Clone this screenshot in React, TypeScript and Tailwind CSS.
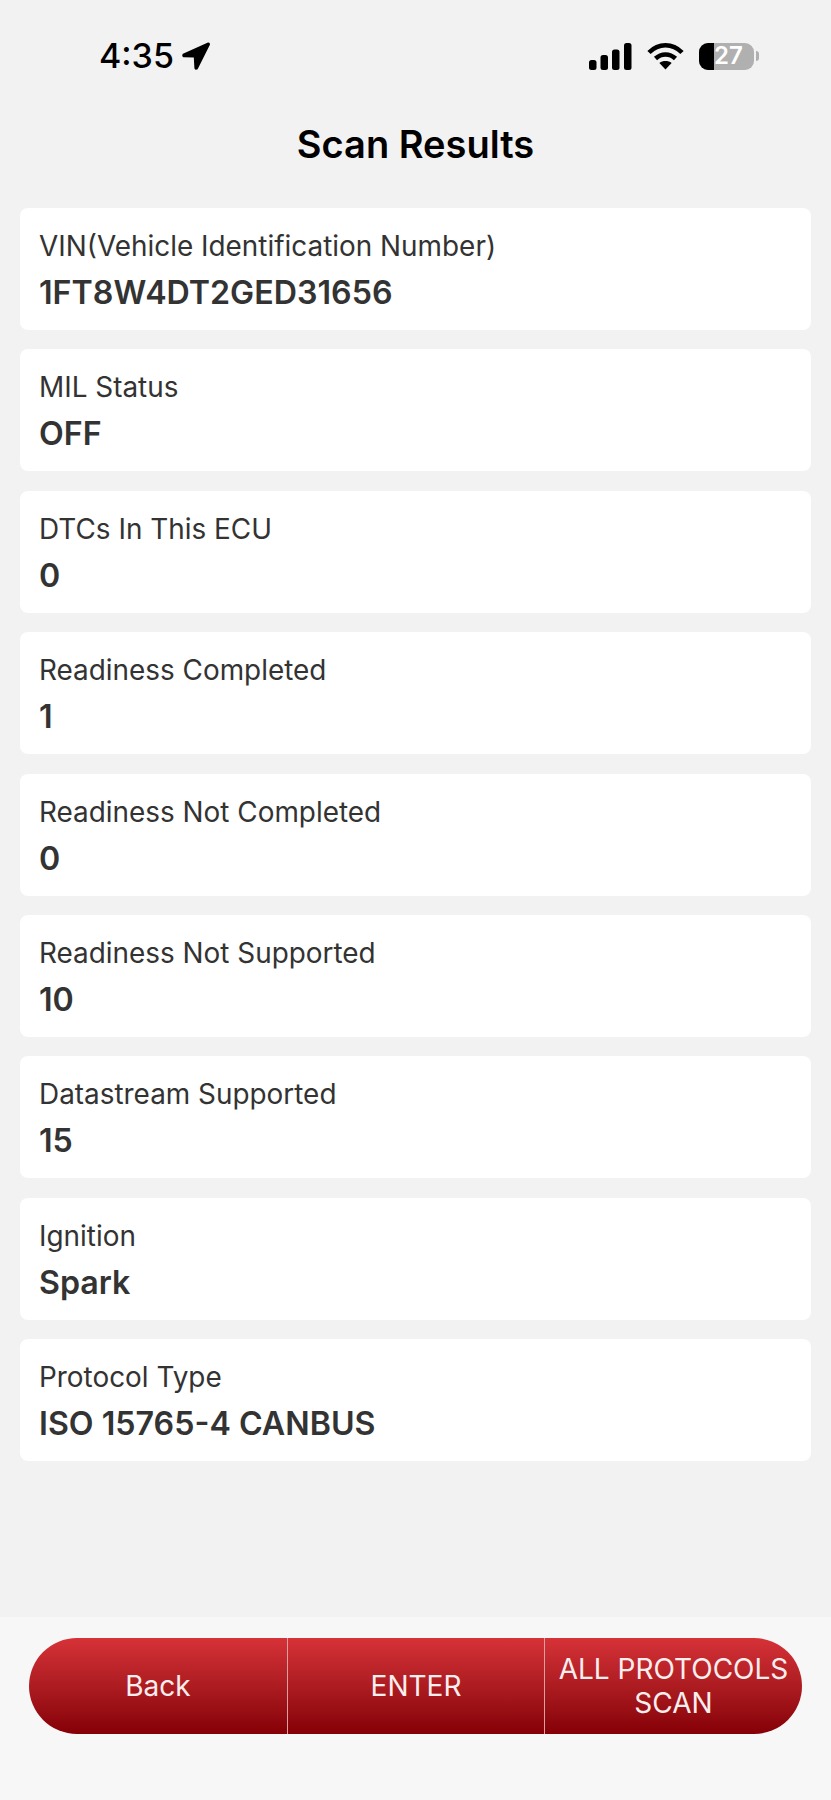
import React from 'react'

const rows = [
  { label: 'VIN(Vehicle Identification Number)', value: '1FT8W4DT2GED31656' },
  { label: 'MIL Status', value: 'OFF' },
  { label: 'DTCs In This ECU', value: '0' },
  { label: 'Readiness Completed', value: '1' },
  { label: 'Readiness Not Completed', value: '0' },
  { label: 'Readiness Not Supported', value: '10' },
  { label: 'Datastream Supported', value: '15' },
  { label: 'Ignition', value: 'Spark' },
  { label: 'Protocol Type', value: 'ISO 15765-4 CANBUS' },
]

const StatusBar: React.FC = () => (
  <div className="flex h-[40px] items-center justify-between pl-[99px] pr-[72px] text-black">
    <div className="flex items-center gap-[8px]">
      <span className="text-[34px] font-medium leading-none">4:35</span>
      <svg width="28" height="28" viewBox="0 0 28 28" fill="currentColor">
        <path d="M26 .6 1.5 11.6C-.4 12.5 0 15.2 2.2 15.2l9.6.3.6 10.4c.1 2 2.8 2.5 3.6.6L27.9 2.7c.4-1.3-.8-2.6-1.9-2.1Z" />
      </svg>
    </div>
    <div className="flex items-center">
      <svg width="43" height="27" viewBox="0 0 43 27" fill="currentColor" className="mr-[15px]">
        <rect x="0" y="17" width="7.5" height="10" rx="2.5" />
        <rect x="11.5" y="12" width="7.5" height="15" rx="2.5" />
        <rect x="23" y="6.5" width="7.5" height="20.5" rx="2.5" />
        <rect x="35" y="0" width="7.5" height="27" rx="2.5" />
      </svg>
      <svg width="37" height="28" viewBox="0 0 37 28" fill="none" stroke="currentColor" strokeWidth="4.6" className="mr-[15px]">
        <path d="M2 10.5C11.5 .8 25.5 .8 35 10.5" />
        <path d="M8.5 16.5c5.8-5.4 14.2-5.4 20 0" />
        <path d="M18.5 27.5 12.4 21c3.4-2.6 8.8-2.6 12.2 0Z" fill="currentColor" stroke="none" />
      </svg>
      <div className="relative flex h-[27px] w-[55px] overflow-hidden rounded-[9px] bg-[#b0b0b0]">
        <div className="h-full w-[15px] bg-black" />
        <span className="absolute inset-0 flex items-center justify-center pl-[4px] text-[24px] font-semibold leading-none text-white">27</span>
      </div>
      <div className="ml-[2px] h-[10px] w-[3px] rounded-r-full bg-[#b0b0b0]" />
    </div>
  </div>
)

const ResultCard: React.FC<{ label: string; value: string }> = ({ label, value }) => (
  <div className="flex h-[122px] flex-col rounded-[8px] bg-white pl-[19px] pr-[20px] pt-[20px]">
    <div className="text-[27.9px] leading-[36px] text-[#333333]">{label}</div>
    <div className="mt-[10px] text-[32.2px] font-semibold leading-[38px] text-[#333333]">{value}</div>
  </div>
)

export default function App() {
  return (
    <div className="flex h-[1800px] w-[831px] flex-col bg-[#f2f2f2] font-['Inter',sans-serif]">
      <div className="pt-[36px]">
        <StatusBar />
      </div>
      <h1 className="mt-[40px] text-center text-[38px] font-semibold leading-[56px] text-black">Scan Results</h1>
      <div className="mt-[36px] flex flex-col gap-[19.4px] px-[20px]">
        {rows.map((row) => (
          <ResultCard key={row.label} label={row.label} value={row.value} />
        ))}
      </div>
      <div className="mt-auto h-[183px] bg-[#f7f7f7] pl-[29px] pr-[29px] pt-[21px]">
        <div className="flex h-[96px] divide-x divide-[#d9a0a0] overflow-hidden rounded-[48px] bg-gradient-to-b from-[#d63238] to-[#850006] text-center text-[28px] leading-[34px] text-[#fbeeee]">
          <button className="flex w-[259px] items-center justify-center">Back</button>
          <button className="flex w-[257px] items-center justify-center">ENTER</button>
          <button className="flex flex-1 items-center justify-center">
            ALL PROTOCOLS
            <br />
            SCAN
          </button>
        </div>
      </div>
    </div>
  )
}
